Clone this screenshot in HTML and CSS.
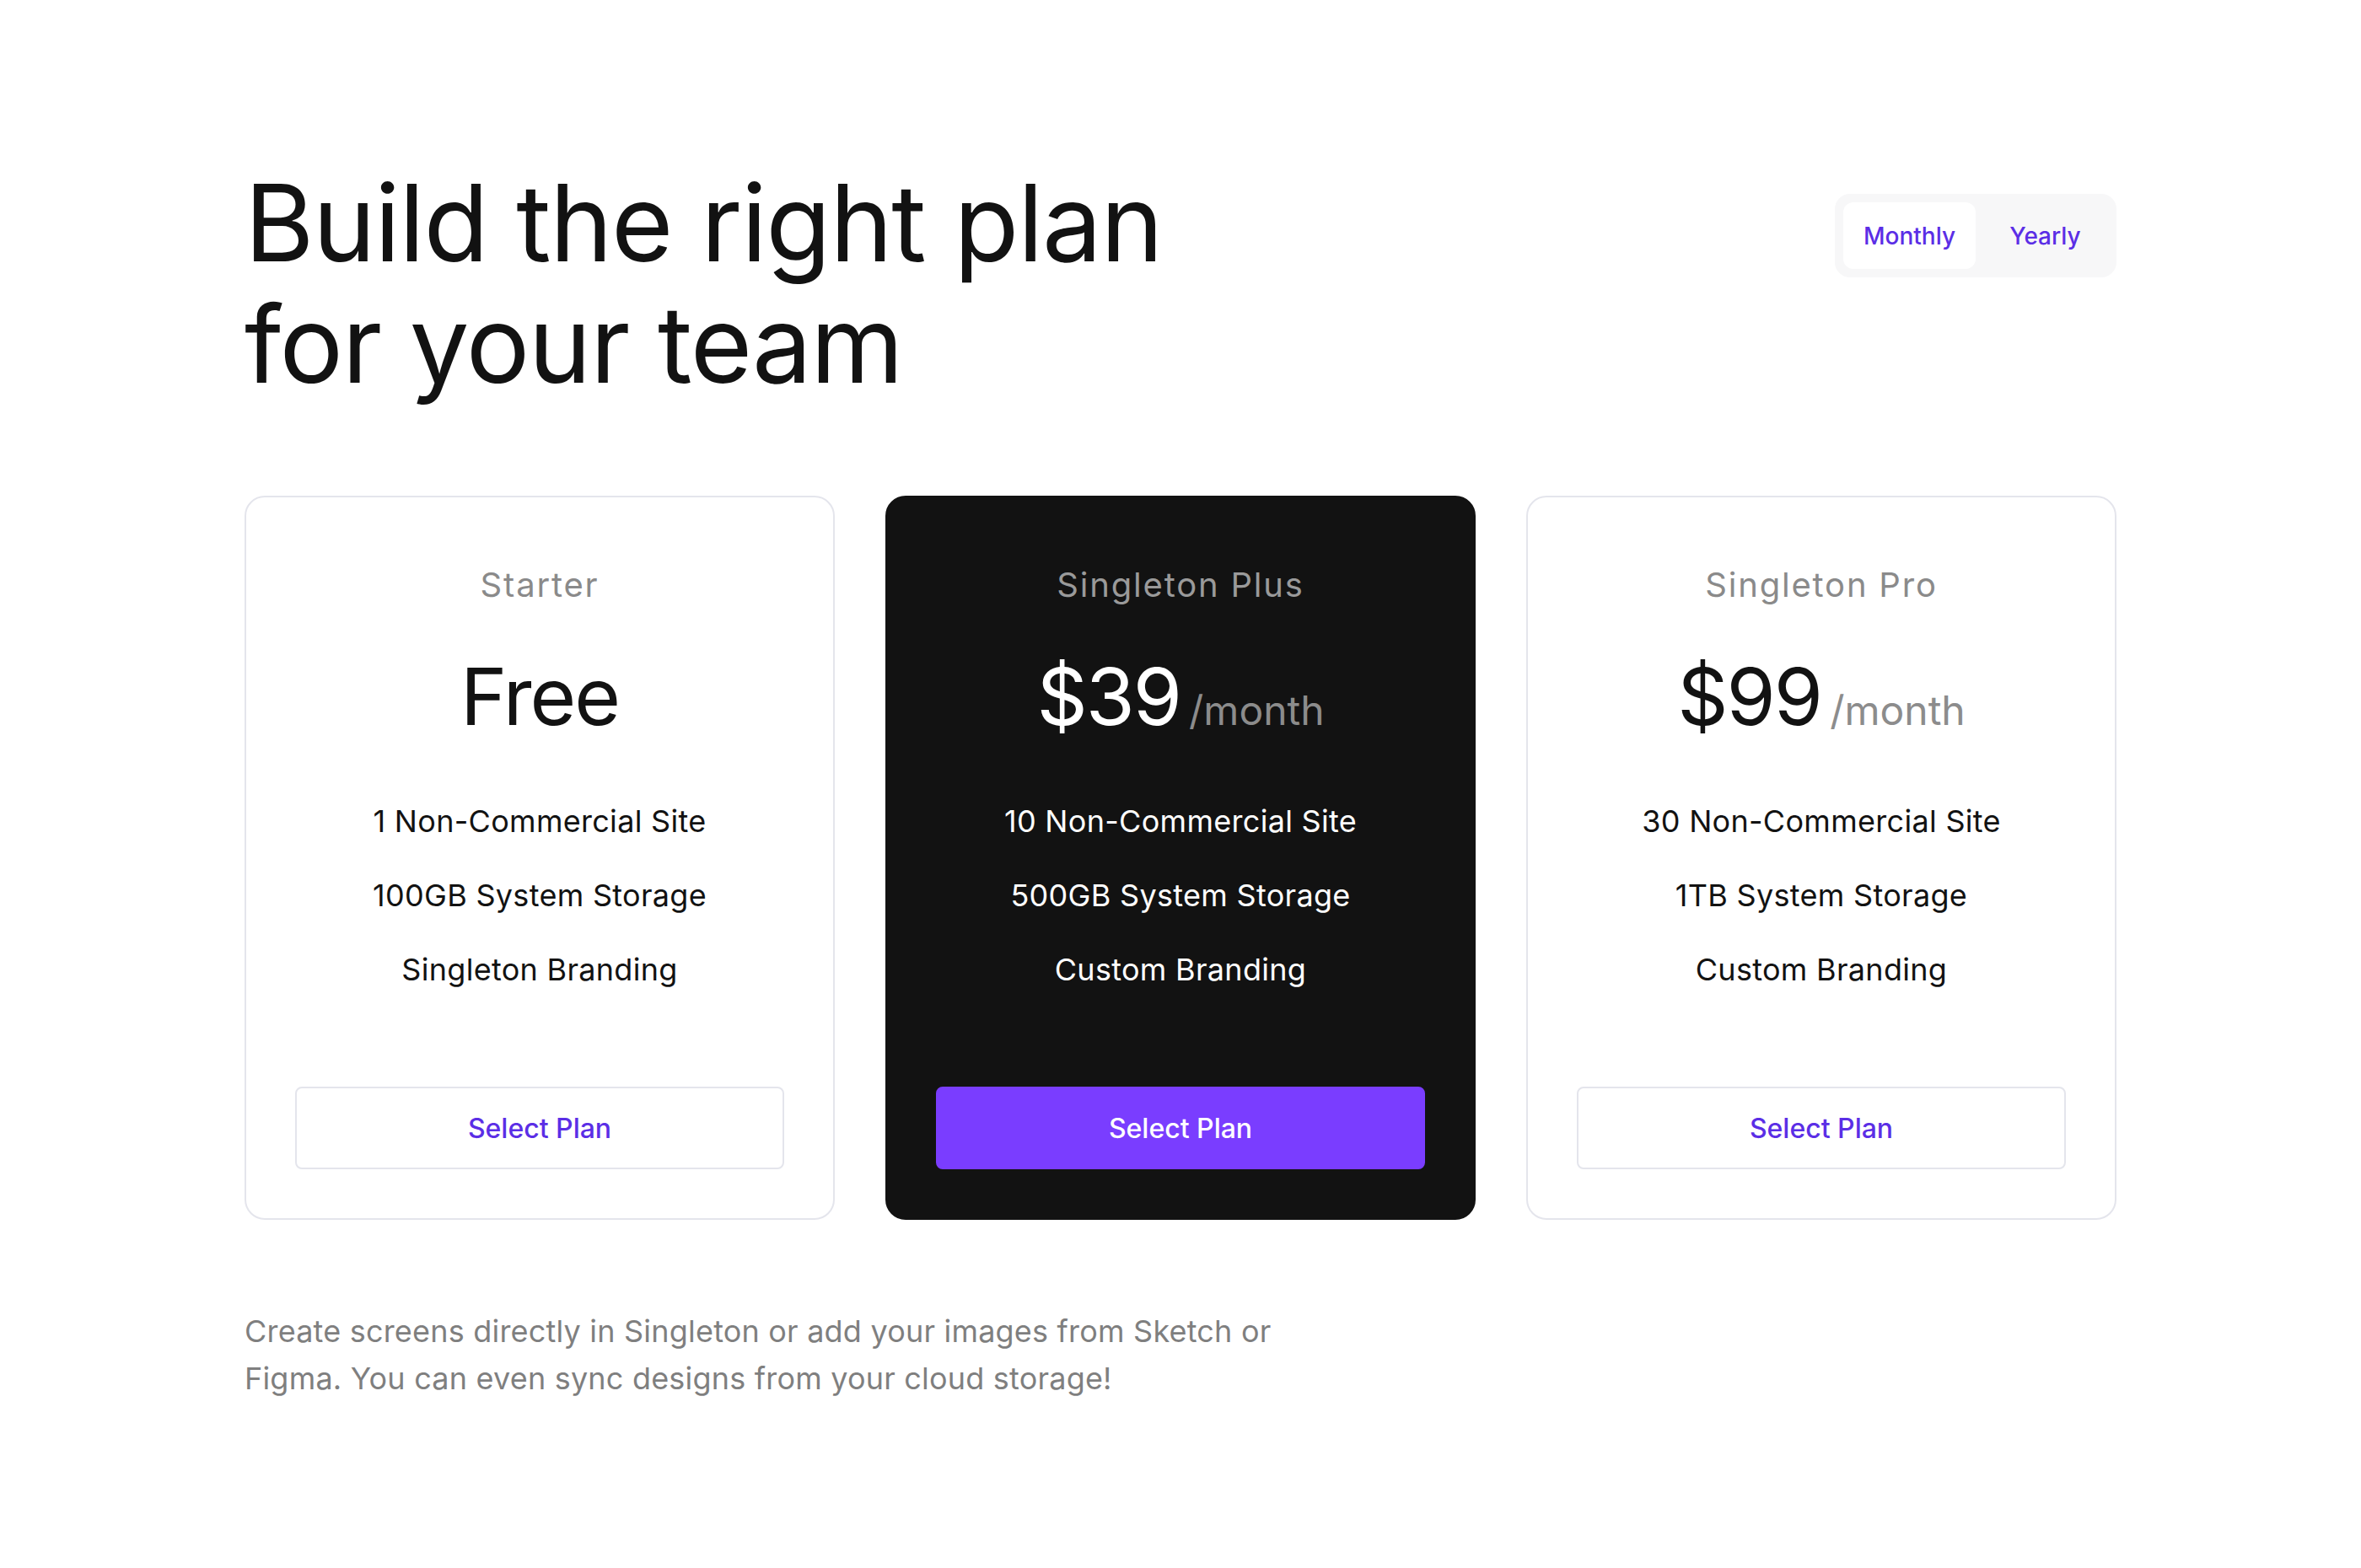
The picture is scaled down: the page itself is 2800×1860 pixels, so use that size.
FILE: index.html
```html
<!DOCTYPE html>
<html lang="en">
<head>
<meta charset="utf-8">
<title>Pricing</title>
<link rel="stylesheet" href="styles.css">
</head>
<body>
<main class="page">
  <header class="top">
    <h1 class="title">Build the right plan<br>for your team</h1>
    <div class="toggle">
      <button class="toggle-btn active">Monthly</button>
      <button class="toggle-btn">Yearly</button>
    </div>
  </header>

  <section class="plans">
    <article class="card">
      <h2 class="plan-name">Starter</h2>
      <div class="price">Free</div>
      <ul class="features">
        <li>1 Non-Commercial Site</li>
        <li>100GB System Storage</li>
        <li>Singleton Branding</li>
      </ul>
      <button class="select">Select Plan</button>
    </article>

    <article class="card card-dark">
      <h2 class="plan-name">Singleton Plus</h2>
      <div class="price">$39<span class="per">/month</span></div>
      <ul class="features">
        <li>10 Non-Commercial Site</li>
        <li>500GB System Storage</li>
        <li>Custom Branding</li>
      </ul>
      <button class="select select-primary">Select Plan</button>
    </article>

    <article class="card">
      <h2 class="plan-name">Singleton Pro</h2>
      <div class="price">$99<span class="per">/month</span></div>
      <ul class="features">
        <li>30 Non-Commercial Site</li>
        <li>1TB System Storage</li>
        <li>Custom Branding</li>
      </ul>
      <button class="select">Select Plan</button>
    </article>
  </section>

  <p class="note">Create screens directly in Singleton or add your images from Sketch or Figma. You can even sync designs from your cloud storage!</p>
</main>
</body>
</html>
```

FILE: styles.css
```css
* { box-sizing: border-box; }

html, body {
  margin: 0;
  padding: 0;
  background: #ffffff;
}

body {
  font-family: Inter, "Noto Sans", "Liberation Sans", sans-serif;
  color: #121212;
}

.page {
  width: 2220px;
  margin: 0 auto;
  padding-top: 192px;
  padding-bottom: 120px;
}

.top {
  display: flex;
  justify-content: space-between;
  align-items: flex-start;
}

.title {
  margin: 0;
  font-size: 126px;
  line-height: 144px;
  font-weight: 400;
  letter-spacing: -1.4px;
  color: #121212;
}

.toggle {
  display: flex;
  margin-top: 38px;
  padding: 10px;
  background: #f7f7f8;
  border-radius: 18px;
}

.toggle-btn {
  width: 157px;
  height: 79px;
  border: 0;
  border-radius: 12px;
  background: transparent;
  font-family: inherit;
  font-size: 28px;
  font-weight: 500;
  color: #5b2ee6;
  padding: 0;
}

.toggle-btn.active {
  background: #ffffff;
}

.toggle-btn + .toggle-btn {
  padding-left: 8px;
}

.plans {
  display: grid;
  grid-template-columns: repeat(3, 700px);
  gap: 60px;
  margin-top: 108px;
}

.card {
  display: flex;
  flex-direction: column;
  align-items: center;
  padding: 74px 58px 58px;
  border: 2px solid #e4e5ec;
  border-radius: 24px;
  background: #ffffff;
  text-align: center;
}

.card-dark {
  background: #121212;
  border-color: #121212;
  color: #ffffff;
}

.plan-name {
  margin: 0;
  font-size: 40px;
  line-height: 60px;
  font-weight: 400;
  letter-spacing: 1.8px;
  color: #8a8a8a;
}

.card-dark .plan-name {
  color: #9a9a9a;
}

.price {
  margin-top: 46px;
  font-size: 94px;
  line-height: 112px;
  font-weight: 400;
  letter-spacing: -2px;
}

.per {
  margin-left: 10px;
  font-size: 48px;
  line-height: 1;
  letter-spacing: 0;
  color: #8c8c8c;
}

.features {
  list-style: none;
  margin: 64px 0 0;
  padding: 0;
  display: flex;
  flex-direction: column;
  gap: 32px;
}

.features li {
  font-size: 36px;
  line-height: 56px;
  letter-spacing: 0.3px;
}

.select {
  margin-top: 111px;
  width: 100%;
  height: 98px;
  border: 2px solid #e4e5ec;
  border-radius: 8px;
  background: #ffffff;
  font-family: inherit;
  font-size: 32px;
  font-weight: 500;
  color: #5b2ee6;
}

.select-primary {
  background: #7a3dff;
  border-color: #7a3dff;
  color: #ffffff;
}

.note {
  margin: 104px 0 0;
  max-width: 1240px;
  font-size: 36px;
  line-height: 56px;
  letter-spacing: 0.2px;
  color: #7f7f7f;
}
```
